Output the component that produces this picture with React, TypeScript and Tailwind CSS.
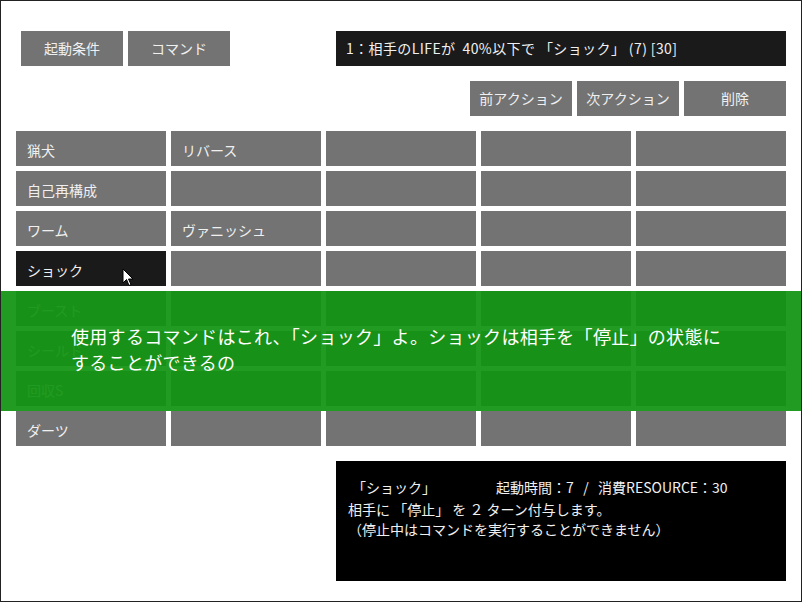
import React from "react";

const rows: string[][] = [
  ["猟犬", "リバース", "", "", ""],
  ["自己再構成", "", "", "", ""],
  ["ワーム", "ヴァニッシュ", "", "", ""],
  ["ショック", "", "", "", ""],
  ["ブースト", "", "", "", ""],
  ["シールド", "", "", "", ""],
  ["回収S", "", "", "", ""],
  ["ダーツ", "", "", "", ""],
];

const font = { fontFamily: '"Noto Sans CJK JP", "Noto Sans", sans-serif' };

export default function App() {
  return (
    <div
      className="relative w-[802px] h-[602px] bg-white border border-[#222] overflow-hidden text-[#f0f0f0]"
      style={font}
    >
      {/* Top row */}
      <div className="flex mt-[30px] ml-[20px] mr-[15px]">
        <div className="w-[102px] h-[35px] bg-[#737373] flex items-center justify-center text-[14px]">起動条件</div>
        <div className="w-[102px] h-[35px] bg-[#737373] flex items-center justify-center text-[14px] ml-[5px]">コマンド</div>
        <div className="ml-auto w-[450px] h-[35px] bg-[#1a1a1a] flex items-center pl-[10px] text-[14px] tracking-[0.4px] whitespace-pre">
          {"1：相手のLIFEが  40%以下で 「ショック」 (7) [30]"}
        </div>
      </div>

      {/* Action buttons */}
      <div className="flex justify-end gap-[5px] mt-[15px] mr-[15px]">
        {["前アクション", "次アクション", "削除"].map((t) => (
          <div key={t} className="w-[102px] h-[35px] bg-[#737373] flex items-center justify-center text-[14px]">
            {t}
          </div>
        ))}
      </div>

      {/* Grid */}
      <div className="grid grid-cols-[repeat(5,150px)] gap-[5px] mt-[15px] ml-[15px]">
        {rows.flatMap((r, i) =>
          r.map((c, j) => (
            <div
              key={`${i}-${j}`}
              className={`h-[35px] flex items-center pl-[11px] pt-[3px] text-[14px] ${
                i === 3 && j === 0 ? "bg-[#1a1a1a]" : "bg-[#737373]"
              }`}
            >
              {c}
            </div>
          ))
        )}
      </div>

      {/* Detail box */}
      <div className="ml-[335px] mt-[15px] w-[450px] h-[120px] bg-black text-[14px] leading-[20px] pt-[16px] pl-[12px] whitespace-pre">
        <div className="flex">
          <span className="w-[148px] pl-[4px]">「ショック」</span>
          <span>{"起動時間：7   /   消費RESOURCE：30"}</span>
        </div>
        <div className="mt-[2px]">{"相手に 「停止」 を ２ ターン付与します。"}</div>
        <div>（停止中はコマンドを実行することができません）</div>
      </div>

      {/* Message overlay */}
      <div className="absolute left-0 top-[290px] w-full h-[120px] bg-[#119311]/[0.93] flex items-center pl-[70px] text-[18px] leading-[26px] text-white tracking-[0.3px]">
        <div className="-mt-[4px]">
          使用するコマンドはこれ、「ショック」よ。ショックは相手を「停止」の状態に
          <br />
          することができるの
        </div>
      </div>

      {/* Cursor */}
      <svg className="absolute left-[121px] top-[267px]" width="12" height="19" viewBox="0 0 12 19">
        <path d="M1 1 L1 15 L4.5 11.5 L7 17.5 L9 16.5 L6.5 11 L11 11 Z" fill="white" stroke="black" strokeWidth="1" />
      </svg>
    </div>
  );
}
